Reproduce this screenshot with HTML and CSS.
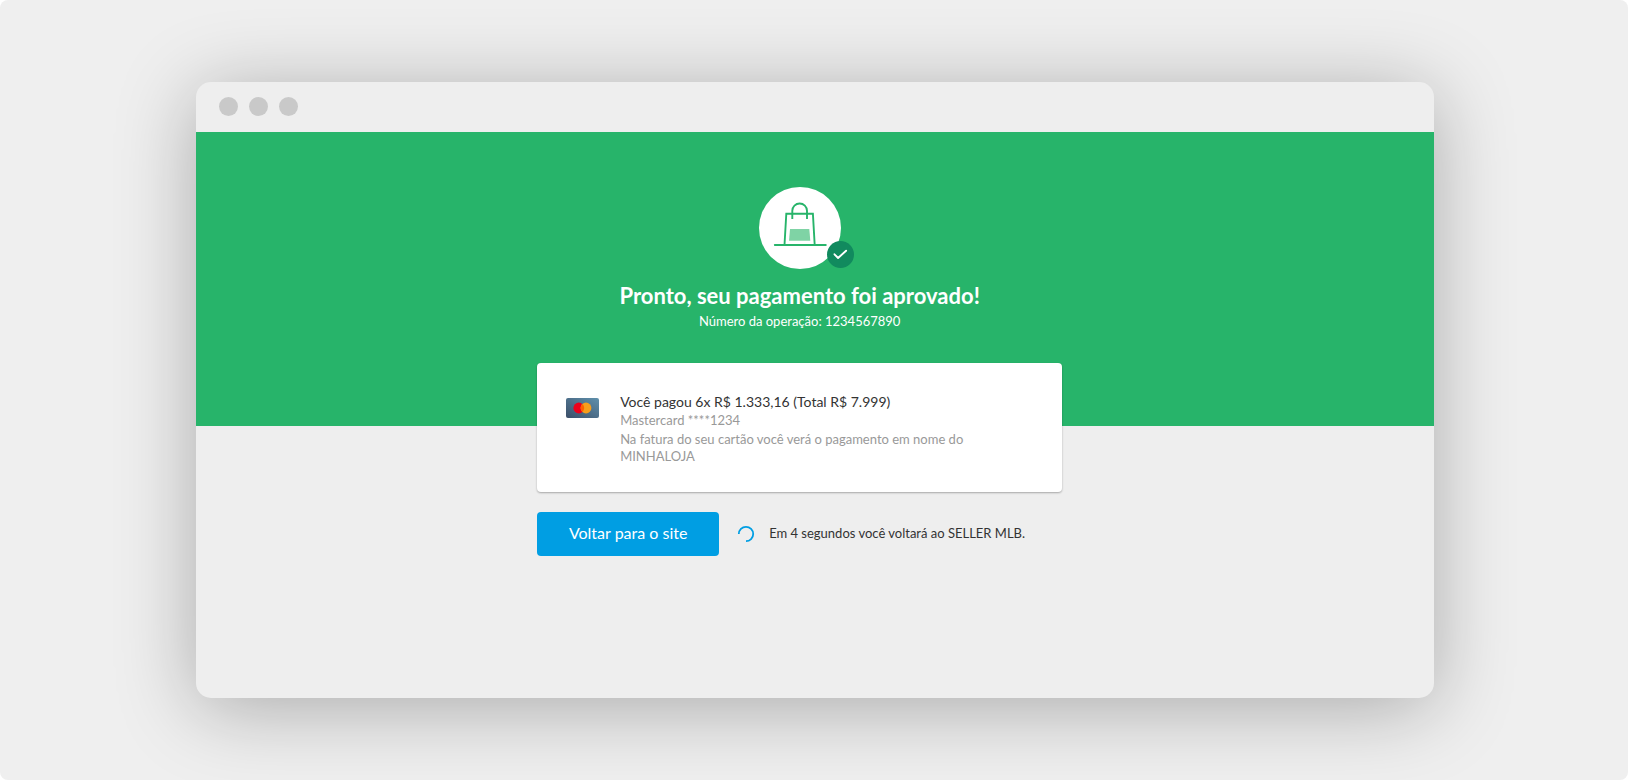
FILE: index.html
```html
<!DOCTYPE html>
<html lang="pt-BR">
<head>
<meta charset="utf-8">
<meta name="viewport" content="width=device-width, initial-scale=1">
<title>Pagamento aprovado</title>
<link rel="stylesheet" href="styles.css">
</head>
<body>
<div class="stage">
  <div class="window">
    <div class="titlebar">
      <span class="dot"></span><span class="dot"></span><span class="dot"></span>
    </div>
    <main class="screen">
      <header class="hero">
        <div class="emblem">
          <svg class="bag" viewBox="0 0 82 82" aria-hidden="true">
            <circle cx="41" cy="41" r="41" fill="#fff"/>
            <path d="M31 42h19.300l1 11.700H30z" fill="#7fd3a5"/>
            <g fill="none" stroke="#27b46a" stroke-width="1.900">
              <path d="M25.500 58l1.800-31.200h26.600l1.800 31.200"/>
              <path d="M33.300 32v-8.200a7.350 7.350 0 0 1 14.700 0V32"/>
              <path d="M15.800 58h51" stroke-linecap="round"/>
            </g>
          </svg>
          <svg class="check" viewBox="0 0 27 27" aria-hidden="true">
            <circle cx="13.500" cy="13.500" r="13.500" fill="#118a5e"/>
            <path d="M7.500 13.300l3.600 3.700 8-7.300" fill="none" stroke="#fff" stroke-width="1.900" stroke-linecap="round" stroke-linejoin="round"/>
          </svg>
        </div>
        <h1 class="title">Pronto, seu pagamento foi aprovado!</h1>
        <p class="operation">Número da operação: 1234567890</p>
      </header>
      <div class="content">
        <section class="card">
          <svg class="brand" viewBox="0 0 33 20" role="img" aria-label="Mastercard">
            <defs><linearGradient id="plate" x1="0" y1="1" x2="1" y2="0"><stop offset="0" stop-color="#3b4e68"/><stop offset="1" stop-color="#5f90ac"/></linearGradient></defs>
            <rect width="33" height="20" rx="2" fill="url(#plate)"/>
            <circle cx="12.800" cy="10" r="5.400" fill="#eb001b"/>
            <circle cx="20" cy="10" r="5.400" fill="#f79e1b"/>
            <path d="M16.400 6a5.400 5.400 0 0 1 0 8a5.400 5.400 0 0 1 0-8z" fill="#ff5f00"/>
          </svg>
          <div class="details">
            <h2 class="paid">Você pagou 6x R$ 1.333,16 (Total R$ 7.999)</h2>
            <p class="method">Mastercard ****1234</p>
            <p class="note">Na fatura do seu cartão você verá o pagamento em nome do MINHALOJA</p>
          </div>
        </section>
        <div class="actions">
          <button class="back" type="button">Voltar para o site</button>
          <svg class="spinner" viewBox="0 0 18 18" aria-hidden="true">
            <path d="M1.800 9A7.200 7.200 0 1 1 9 16.200" fill="none" stroke="#009ee3" stroke-width="1.800"/>
          </svg>
          <p class="countdown">Em 4 segundos você voltará ao SELLER MLB.</p>
        </div>
      </div>
    </main>
  </div>
</div>
</body>
</html>
```
FILE: styles.css
```css
* {
  box-sizing: border-box;
}

body {
  margin: 0;
  background: #fff;
  color: #333;
  font-family: Lato, "Liberation Sans", sans-serif;
}

h1,
h2,
p {
  margin: 0;
  font-weight: 400;
}

.stage {
  min-height: 100vh;
  padding: 82px 11.9% 82px 12.04%;
  display: flex;
  border-radius: 8px;
  background: #efefef;
  overflow: hidden;
}

.window {
  flex: 1;
  display: flex;
  flex-direction: column;
  border-radius: 15px;
  background: #eee;
  box-shadow: 0 10px 80px rgba(0, 0, 0, 0.29);
  overflow: hidden;
}

.titlebar {
  height: 50px;
  padding: 0 23px 1px;
  display: flex;
  align-items: center;
  gap: 11px;
}

.dot {
  width: 19px;
  height: 19px;
  border-radius: 50%;
  background: #c9c9c9;
}

.hero {
  padding: 55px 31px 95px 0;
  display: flex;
  flex-direction: column;
  align-items: center;
  background: #27b46a;
  color: #fff;
  text-align: center;
}

.emblem {
  position: relative;
  width: 82px;
  height: 82px;
}

.bag {
  display: block;
  width: 100%;
}

.check {
  position: absolute;
  right: -13px;
  bottom: 1px;
  width: 27px;
}

.title {
  margin-top: 12px;
  font-size: 22px;
  line-height: 30px;
  font-weight: 700;
}

.operation {
  font-size: 13px;
  line-height: 20px;
}

.content {
  margin-top: -63px;
  padding: 0 31px 24px 0;
  display: flex;
  flex-direction: column;
  align-items: center;
}

.card,
.actions {
  width: 525px;
  max-width: 100%;
}

.card {
  padding: 29px 29px 27px;
  display: flex;
  align-items: flex-start;
  gap: 21px;
  border-radius: 4px;
  background: #fff;
  box-shadow: 0 1px 2px rgba(0, 0, 0, 0.3);
}

.brand {
  flex: none;
  width: 33px;
  margin-top: 6px;
}

.details {
  max-width: 370px;
}

.paid {
  font-size: 14px;
  line-height: 20px;
}

.method,
.note {
  color: #999;
  font-size: 13px;
  line-height: 17px;
}

.note {
  margin-top: 2px;
}

.actions {
  margin-top: 20px;
  display: flex;
  align-items: center;
}

.back {
  width: 182px;
  height: 44px;
  padding: 0 0 4px;
  border: 0;
  border-radius: 4px;
  background: #009ee3;
  color: #fff;
  font: 400 16px Lato, "Liberation Sans", sans-serif;
}

.spinner {
  width: 18px;
  margin: 0 14px 0 18px;
}

.countdown {
  padding-bottom: 2px;
  font-size: 13px;
  line-height: 20px;
}
```
